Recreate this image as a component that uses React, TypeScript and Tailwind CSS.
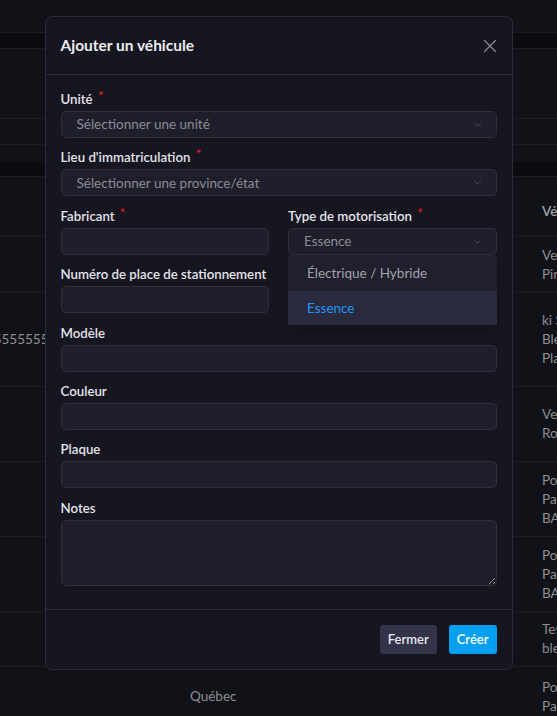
import { ChevronDown, X } from "lucide-react";

const rows: { h: number; left?: string; leftX?: number; right: string[] }[] = [
  { h: 56, right: ["Vert", "Pirelli"] },
  { h: 94, left: "5555555555", leftX: -22, right: ["ki Sorento", "Bleu", "Place 12"] },
  { h: 75, right: ["Vert", "Rouge"] },
  { h: 75, right: ["Porsche", "Passat", "BAC 123"] },
  { h: 75, right: ["Porsche", "Passat", "BAC 456"] },
  { h: 55, right: ["Test", "bleu"] },
  { h: 60, left: "Québec", leftX: 190, right: ["Porsche", "Passat"] },
];

function Background() {
  return (
    <div className="absolute inset-0 overflow-hidden bg-[#111217] text-[13.5px] text-[#8e8e93]">
      <div className="h-[33px] border-b border-[#1b1c22]" />
      <div className="h-[16px] border-b border-[#1b1c22] bg-[#0b0c10]" />
      <div className="h-[70px] border-b border-[#1b1c22]" />
      <div className="h-[26px] border-b border-[#1b1c22]" />
      <div className="h-[17px]" />
      <div className="h-[15px] border-b border-[#1b1c22] bg-[#0b0c10]" />
      <div className="relative flex h-[60px] items-center border-b border-[#1b1c22] pt-[10px]">
        <span className="absolute left-[542px] whitespace-nowrap font-semibold text-[#a4a4aa]">Véhicule</span>
      </div>
      {rows.map((r, i) => (
        <div key={i} className="relative flex items-center border-b border-[#1b1c22]" style={{ height: r.h }}>
          {r.left && (
            <span className="absolute whitespace-nowrap" style={{ left: r.leftX }}>
              {r.left}
            </span>
          )}
          <div className="absolute left-[542px] flex flex-col whitespace-nowrap leading-[19px]">
            {r.right.map((t) => (
              <span key={t}>{t}</span>
            ))}
          </div>
        </div>
      ))}
    </div>
  );
}

function Label({ children, required }: { children: string; required?: boolean }) {
  return (
    <label className="flex h-[24px] items-center whitespace-nowrap pt-[2px] text-[13.25px] font-semibold text-[#e4e4ea]">
      {children}
      {required && <span className="ml-[5px] -mt-[8px] text-[14px] leading-none font-normal text-[#e11d1d]">*</span>}
    </label>
  );
}

function Select({ value, placeholder }: { value?: string; placeholder?: string }) {
  return (
    <div className="flex h-[27px] items-center justify-between rounded-[5px] border border-[#2e2e42] bg-[#1f1f2c] pl-[15px] pr-[12px] text-[13.5px]">
      <span className="text-[#8b8b96]">{value ?? placeholder}</span>
      <ChevronDown className="h-[13px] w-[13px] text-[#4e4e5e]" strokeWidth={1.5} />
    </div>
  );
}

function Input() {
  return <div className="h-[27px] rounded-[5px] border border-[#2e2e42] bg-[#1f1f2c]" />;
}

export default function App() {
  return (
    <div className="relative h-[716px] w-[557px] overflow-hidden" style={{ fontFamily: "Lato, 'Noto Sans', sans-serif" }}>
      <Background />
      <div className="absolute inset-0 flex justify-center pt-[16px]">
        <div className="flex h-[654px] w-[468px] flex-col overflow-hidden rounded-[7px] border border-[#2b2b3e] bg-[#161621]">
          <div className="flex h-[58px] shrink-0 items-center justify-between border-b border-[#2b2b3e] pl-[15px] pr-[11px]">
            <h2 className="text-[15.5px] font-bold text-[#ececf0]">Ajouter un véhicule</h2>
            <X className="h-[22px] w-[22px] text-[#8a8a92]" strokeWidth={1.4} />
          </div>

          <div className="flex flex-1 flex-col gap-[7.4px] px-[15px] pt-[12px]">
            <div>
              <Label required>Unité</Label>
              <Select placeholder="Sélectionner une unité" />
            </div>
            <div>
              <Label required>Lieu d'immatriculation</Label>
              <Select placeholder="Sélectionner une province/état" />
            </div>
            <div className="grid grid-cols-2 gap-x-[19px] gap-y-[7.4px]">
              <div>
                <Label required>Fabricant</Label>
                <Input />
              </div>
              <div className="relative">
                <Label required>Type de motorisation</Label>
                <Select value="Essence" />
                <div className="absolute left-0 right-0 top-[51px] z-10 flex flex-col text-[13.5px] shadow-lg">
                  <div className="flex h-[36px] items-center bg-[#1f1f2d] px-[19px] text-[#a2a2ac]">Électrique / Hybride</div>
                  <div className="flex h-[34px] items-center bg-[#2a2a3e] px-[19px] text-[#2196f3]">Essence</div>
                </div>
              </div>
              <div>
                <Label>Numéro de place de stationnement</Label>
                <Input />
              </div>
            </div>
            <div>
              <Label>Modèle</Label>
              <Input />
            </div>
            <div>
              <Label>Couleur</Label>
              <Input />
            </div>
            <div>
              <Label>Plaque</Label>
              <Input />
            </div>
            <div>
              <Label>Notes</Label>
              <textarea className="block h-[66px] w-full resize-y rounded-[5px] border border-[#2e2e42] bg-[#1f1f2c] outline-none" />
            </div>
          </div>

          <div className="flex h-[60px] shrink-0 items-center justify-end gap-[12px] border-t border-[#2b2b3e] px-[15px]">
            <button className="h-[29px] rounded-[3px] bg-[#33334a] px-[8px] text-[13px] font-semibold text-[#e6e6ee]">Fermer</button>
            <button className="h-[29px] rounded-[3px] bg-[#039ff0] px-[8px] text-[13px] font-semibold text-white">Créer</button>
          </div>
        </div>
      </div>
    </div>
  );
}
